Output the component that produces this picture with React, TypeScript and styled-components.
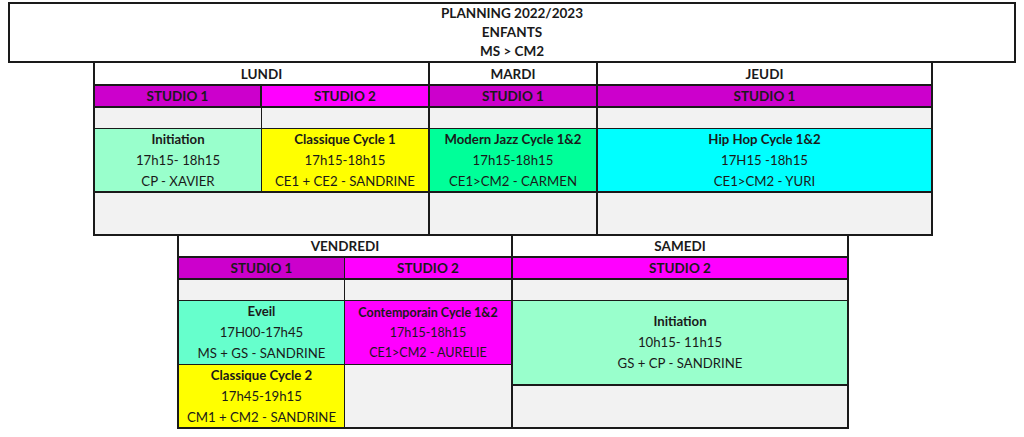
import styled, { createGlobalStyle } from "styled-components";

const GlobalStyle = createGlobalStyle`
  body {
    margin: 0;
    background: #fff;
    font-family: Lato, "Liberation Sans", sans-serif;
    color: #1a1a1a;
  }
`;

const colors = {
  studio1: "#cc00cc",
  studio2: "#ff00ff",
  empty: "#f2f2f2",
  initiation: "#99ffcc",
  classique: "#ffff00",
  jazz: "#00ff99",
  hiphop: "#00ffff",
  eveil: "#66ffcc",
  contemporain: "#ff00ff",
};

const Page = styled.div`
  padding: 2px 8px 0;
  display: flex;
  flex-direction: column;
  align-items: flex-start;
`;

const TitleBox = styled.div`
  box-sizing: border-box;
  width: 1008px;
  height: 61px;
  border: 2px solid #1a1a1a;
  display: flex;
  flex-direction: column;
  align-items: center;
  justify-content: center;
  font-weight: 700;
  font-size: 13.5px;
  line-height: 19px;
`;

const Table = styled.div<{ $cols: string; $rows: string; $offset: number }>`
  box-sizing: border-box;
  margin-left: ${(p) => p.$offset}px;
  display: grid;
  grid-template-columns: ${(p) => p.$cols};
  grid-template-rows: ${(p) => p.$rows};
  border: 2px solid #1a1a1a;
  border-top: none;
`;

const Cell = styled.div<{
  $bg?: string;
  $span?: number;
  $rowSpan?: number;
  $right?: number;
  $bottom?: number;
  $bold?: boolean;
}>`
  box-sizing: border-box;
  grid-column: span ${(p) => p.$span || 1};
  grid-row: span ${(p) => p.$rowSpan || 1};
  background: ${(p) => p.$bg || "#fff"};
  border-right: ${(p) => p.$right ?? 0}px solid #1a1a1a;
  border-bottom: ${(p) => p.$bottom ?? 0}px solid #1a1a1a;
  display: flex;
  flex-direction: column;
  align-items: center;
  justify-content: center;
  text-align: center;
  font-size: ${(p) => (p.$bold ? 13.5 : 13)}px;
  font-weight: ${(p) => (p.$bold ? 700 : 400)};
  white-space: nowrap;
`;

const Stack = styled.div`
  display: flex;
  flex-direction: column;
  height: 100%;
  width: 100%;
`;

const Block = styled.div<{ $bg: string; $h?: number; $bottom?: number }>`
  box-sizing: border-box;
  background: ${(p) => p.$bg};
  height: ${(p) => (p.$h ? `${p.$h}px` : "auto")};
  flex: ${(p) => (p.$h ? "none" : 1)};
  border-bottom: ${(p) => p.$bottom ?? 0}px solid #1a1a1a;
  display: flex;
  flex-direction: column;
  align-items: center;
  justify-content: center;
`;

const Course = styled.div<{ $small?: boolean }>`
  display: flex;
  flex-direction: column;
  align-items: center;
  font-size: ${(p) => (p.$small ? 12.5 : 13.2)}px;
  line-height: ${(p) => (p.$small ? 20 : 21)}px;
  color: #1a1a1a;

  b {
    font-weight: 700;
  }
`;

type Lesson = { title: string; time: string; who: string; small?: boolean };

const CourseText = ({ title, time, who, small }: Lesson) => (
  <Course $small={small}>
    <b>{title}</b>
    <span>{time}</span>
    <span>{who}</span>
  </Course>
);

export default function App() {
  return (
    <>
      <GlobalStyle />
      <Page>
        <TitleBox>
          <span>PLANNING 2022/2023</span>
          <span>ENFANTS</span>
          <span>MS &gt; CM2</span>
        </TitleBox>

        <Table $offset={85} $cols="167px 168px 168px 333px" $rows="23px 22px 21px 64px 41px">
          {/* jours */}
          <Cell $span={2} $right={2} $bottom={2} $bold>LUNDI</Cell>
          <Cell $right={2} $bottom={2} $bold>MARDI</Cell>
          <Cell $bottom={2} $bold>JEUDI</Cell>

          {/* studios */}
          <Cell $bg={colors.studio1} $right={2} $bottom={2} $bold>STUDIO 1</Cell>
          <Cell $bg={colors.studio2} $right={2} $bottom={2} $bold>STUDIO 2</Cell>
          <Cell $bg={colors.studio1} $right={2} $bottom={2} $bold>STUDIO 1</Cell>
          <Cell $bg={colors.studio1} $bottom={2} $bold>STUDIO 1</Cell>

          <Cell $bg={colors.empty} $right={1} $bottom={1} />
          <Cell $bg={colors.empty} $right={2} $bottom={1} />
          <Cell $bg={colors.empty} $right={2} $bottom={1} />
          <Cell $bg={colors.empty} $bottom={1} />

          <Cell $bg={colors.initiation} $right={1} $bottom={2}>
            <CourseText title="Initiation" time="17h15- 18h15" who="CP - XAVIER" />
          </Cell>
          <Cell $bg={colors.classique} $right={2} $bottom={2}>
            <CourseText title="Classique Cycle 1" time="17h15-18h15" who="CE1 + CE2 - SANDRINE" />
          </Cell>
          <Cell $bg={colors.jazz} $right={2} $bottom={2}>
            <CourseText title="Modern Jazz Cycle 1&2" time="17h15-18h15" who="CE1>CM2 - CARMEN" />
          </Cell>
          <Cell $bg={colors.hiphop} $bottom={2}>
            <CourseText title="Hip Hop Cycle 1&2" time="17H15 -18h15" who="CE1>CM2 - YURI" />
          </Cell>

          <Cell $bg={colors.empty} $span={2} $right={2} />
          <Cell $bg={colors.empty} $right={2} />
          <Cell $bg={colors.empty} />
        </Table>

        <Table $offset={169} $cols="166px 168px 334px" $rows="22px 22px 21px 64px 62px">
          <Cell $span={2} $right={2} $bottom={2} $bold>VENDREDI</Cell>
          <Cell $bottom={2} $bold>SAMEDI</Cell>

          <Cell $bg={colors.studio1} $right={1} $bottom={2} $bold>STUDIO 1</Cell>
          <Cell $bg={colors.studio2} $right={2} $bottom={2} $bold>STUDIO 2</Cell>
          <Cell $bg={colors.studio2} $bottom={2} $bold>STUDIO 2</Cell>

          <Cell $bg={colors.empty} $right={1} $bottom={1} />
          <Cell $bg={colors.empty} $right={2} $bottom={1} />
          <Cell $bg={colors.empty} $bottom={1} />

          <Cell $bg={colors.eveil} $right={1} $bottom={1}>
            <CourseText title="Eveil" time="17H00-17h45" who="MS + GS - SANDRINE" />
          </Cell>
          <Cell $bg={colors.contemporain} $right={2} $bottom={1}>
            <CourseText small title="Contemporain Cycle 1&2" time="17h15-18h15" who="CE1>CM2 - AURELIE" />
          </Cell>
          <Cell $rowSpan={2}>
            <Stack>
              <Block $bg={colors.initiation} $h={85} $bottom={2}>
                <CourseText title="Initiation" time="10h15- 11h15" who="GS + CP - SANDRINE" />
              </Block>
              <Block $bg={colors.empty} />
            </Stack>
          </Cell>

          <Cell $bg={colors.classique} $right={1}>
            <CourseText title="Classique Cycle 2" time="17h45-19h15" who="CM1 + CM2 - SANDRINE" />
          </Cell>
          <Cell $bg={colors.empty} $right={2} />
        </Table>
      </Page>
    </>
  );
}
